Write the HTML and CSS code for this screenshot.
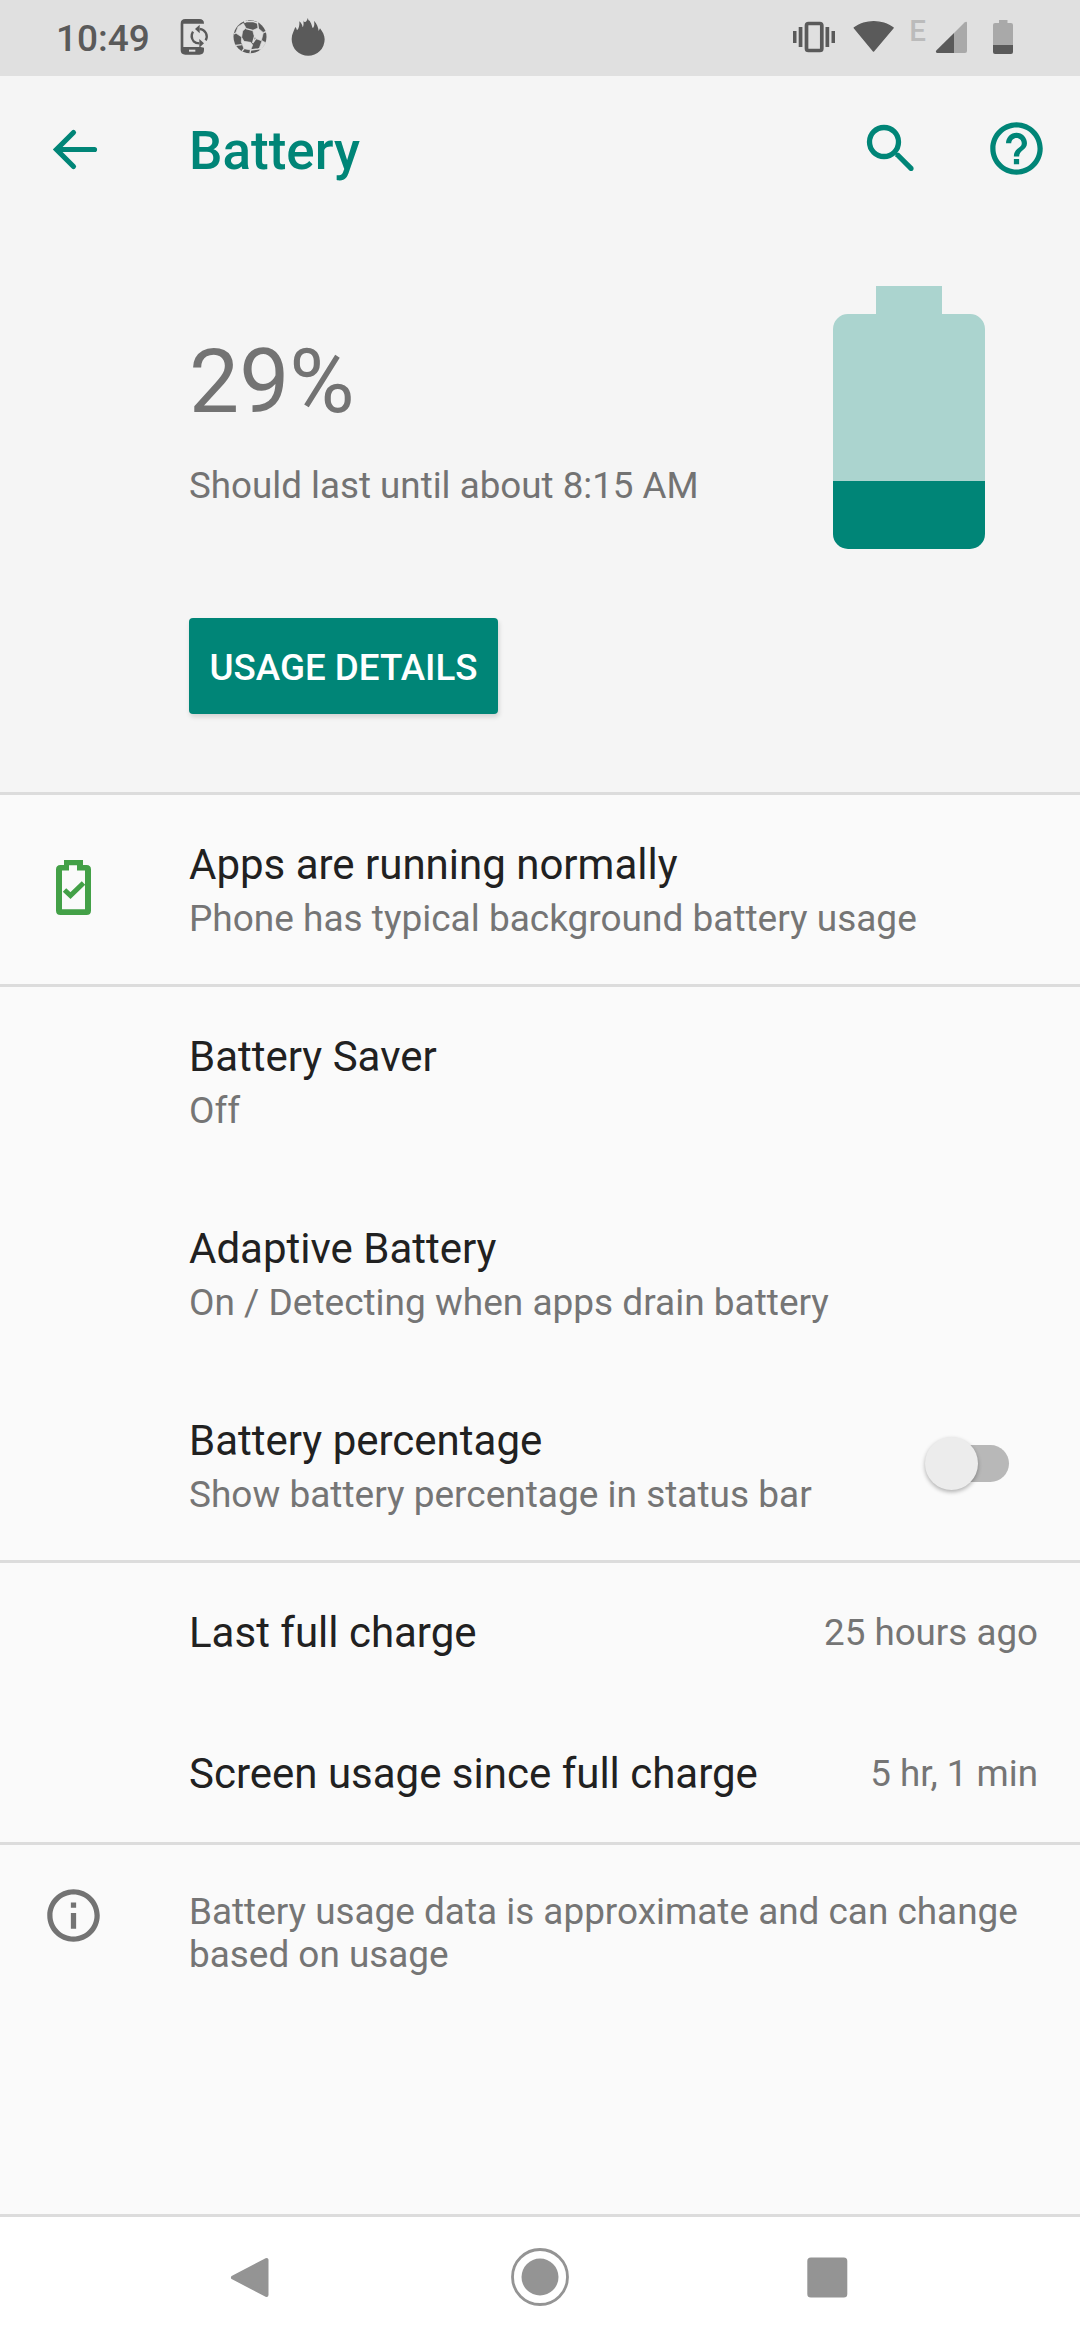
FILE: index.html
```html
<!DOCTYPE html>
<html lang="en">
<head>
<meta charset="utf-8">
<title>Battery</title>
<link rel="stylesheet" href="styles.css">
</head>
<body>
<div class="screen">
  <header class="status">
    <span class="clock">10:49</span>
    <svg class="status-icons" width="170" height="76" viewBox="0 0 510 228">
      <path fill="#5a5a5a" d="M46 57h42q14 0 14 14H40V141h52l10 2v7q0 14-14 14H46q-14 0-14-14V71q0-14 14-14z"/>
      <path fill="#e0e0e0" d="M57 149h19v6H57z"/>
      <path fill="none" stroke="#5a5a5a" stroke-width="7" d="M69 95Q60 110 71 124Q77 130 88 130M89 87Q102 88 108 100Q113 110 107 121"/>
      <path fill="#5a5a5a" d="M75 87l14-13v26zM102 130l-14-13v26z"/>
      <circle cx="240" cy="110.500" r="49.500" fill="#5a5a5a"/>
      <g fill="#dedede" stroke="#dedede" stroke-width="2" stroke-linejoin="round">
        <path d="M204 80l16-10 8 14-10 9-3 18-18-12z"/>
        <path d="M248 91l16-7 16 14-6 24-16-6-6-10z"/>
        <path d="M215 112l7 12 20 3 6 8-6 15-20-4-8-20z"/>
        <path d="M276 122l11 6-12 20-8-1z"/>
        <path d="M224 64l10-2-10 7z"/>
      </g>
      <g fill="none" stroke="#dedede" stroke-width="4">
        <path d="M228 86l20 5M262 64l3 22M280 98l8-3M254 107l-6 22 10-13M242 150l-2 10M242 150l22-3 10-2M197 99l-5 3M215 134l-17 2M222 146l-6 8M222 65l26-1 14 5"/>
      </g>
      <path fill="#5a5a5a" d="M365 117c0-15 7-24 11-36 3 3 4 6 5 10 6-5 8-15 7-27 6 5 9 11 10 18 4-4 3-16 1-24 0 5 2 8 6 8 3 0 6-5 9-13 0 5 1 8 5 9 3 6 6 11 7 17q1 8 5 2c3-6 2-13 1-19 8 8 13 20 14 31l4-8c7 9 14 20 14 33a49.500 49.500 0 0 1-99 0z"/>
    </svg>
    <span class="grow"></span>
    <svg class="status-icons" width="290" height="76" viewBox="790 0 290 76">
      <rect x="806.500" y="23.500" width="15.300" height="27" rx="2" fill="none" stroke="#5a5a5a" stroke-width="3.700"/>
      <path fill="#5a5a5a" d="M793 31h3.500v12H793zM798.700 27h3.700v20h-3.700zM825.500 27h3.700v20h-3.700zM831.500 31h3.500v12h-3.500z"/>
      <path fill="#5a5a5a" stroke="#5a5a5a" stroke-width="1.500" stroke-linejoin="round" d="M873.500 51l-19.200-23.200a34 34 0 0 1 38.800 0z"/>
      <path fill="#a9a9a9" d="M967 23v28q0 2-2 2h-11V33l10.500-10.500q2.500-1.500 2.500.5z"/>
      <path fill="#5a5a5a" d="M954 33v20h-17q-2-1-.5-2.700z"/>
      <path fill="#a9a9a9" d="M999 20h8.500v3h3.500q2 0 2 2v20h-20V25q0-2 2-2h4z"/>
      <path fill="#5a5a5a" d="M993 45h20v7q0 2-2 2h-16q-2 0-2-2z"/>
      <text class="edge" x="909.200" y="41">E</text>
    </svg>
  </header>

  <section class="summary-panel">
    <div class="toolbar">
      <svg class="back" width="63" height="63" viewBox="0 0 63 63"><path fill="none" stroke="#008577" stroke-width="5.200" stroke-linecap="round" d="M52.500 31.500H15M31.500 14.500l-17 17 17 17" stroke-linejoin="miter"/></svg>
      <h1>Battery</h1>
      <svg width="63" height="63" viewBox="0 0 63 63"><circle cx="25" cy="24" r="14.500" fill="none" stroke="#008577" stroke-width="5.300"/><path fill="#008577" d="M37 34.700h3l14.300 14.200q1 2-.4 3.500-1.800 1.200-3.500 0L36.300 38.300v-3z"/></svg>
      <svg class="help" width="63" height="63" viewBox="0 0 24 24"><path fill="#008577" d="M11 18h2v-2h-2v2zm1-16C6.480 2 2 6.480 2 12s4.480 10 10 10 10-4.480 10-10S17.520 2 12 2zm0 18c-4.410 0-8-3.590-8-8s3.590-8 8-8 8 3.590 8 8-3.590 8-8 8zm0-14c-2.210 0-4 1.790-4 4h2c0-1.100.9-2 2-2s2 .9 2 2c0 2-3 1.750-3 5h2c0-2.250 3-2.500 3-5 0-2.210-1.790-4-4-4z"/></svg>
    </div>
    <div class="level">
      <div class="level-text">
        <div class="percent">29%</div>
        <div class="estimate">Should last until about 8:15 AM</div>
      </div>
      <svg width="152" height="263" viewBox="0 0 152 263"><path fill="#abd4cf" d="M43 0h66v28h28a15 15 0 0 1 15 15v153H0V43a15 15 0 0 1 15-15h28z"/><path fill="#008577" d="M0 195h152v53a15 15 0 0 1-15 15H15a15 15 0 0 1-15-15z"/></svg>
    </div>
    <button class="details">USAGE DETAILS</button>
  </section>

  <main>
    <div class="row line">
      <svg class="icon" width="63" height="63" viewBox="0 0 63 63"><path fill="#43a047" fill-rule="evenodd" d="M22 4h19v5h3.500q4.500 0 4.500 4.500v41q0 4.500-4.500 4.500h-26q-4.500 0-4.500-4.500v-41q0-4.500 4.500-4.500H22zm5 5.300V14.500H20v38.800h23V14.500h-8V9.300z"/><path fill="none" stroke="#43a047" stroke-width="5" d="M22.500 34l6 5.500 13-12.500"/></svg>
      <div class="copy"><div class="title">Apps are running normally</div><div class="sub">Phone has typical background battery usage</div></div>
    </div>
    <div class="row line"><div class="copy"><div class="title">Battery Saver</div><div class="sub">Off</div></div></div>
    <div class="row"><div class="copy"><div class="title">Adaptive Battery</div><div class="sub">On / Detecting when apps drain battery</div></div></div>
    <div class="row">
      <div class="copy"><div class="title">Battery percentage</div><div class="sub">Show battery percentage in status bar</div></div>
      <div class="switch"><span class="thumb"></span></div>
    </div>
    <div class="row short line"><div class="title">Last full charge</div><div class="value">25 hours ago</div></div>
    <div class="row short"><div class="title">Screen usage since full charge</div><div class="value">5 hr, 1 min</div></div>
    <div class="footer line">
      <svg class="icon" width="63" height="63" viewBox="0 0 24 24"><path fill="#737373" d="M11 7h2v2h-2zm0 4h2v6h-2zm1-9C6.480 2 2 6.480 2 12s4.480 10 10 10 10-4.480 10-10S17.520 2 12 2zm0 18c-4.410 0-8-3.590-8-8s3.590-8 8-8 8 3.590 8 8-3.590 8-8 8z"/></svg>
      <p>Battery usage data is approximate and can change based on usage</p>
    </div>
  </main>

  <nav class="nav">
    <svg width="60" height="60" viewBox="0 0 60 60"><path fill="#949494" stroke="#949494" stroke-width="4" stroke-linejoin="round" d="M44.500 13v35L11 30.500z"/></svg>
    <svg width="60" height="60" viewBox="0 0 60 60"><circle cx="30" cy="30" r="27.500" fill="none" stroke="#949494" stroke-width="2.800"/><circle cx="30" cy="30" r="18.500" fill="#949494"/></svg>
    <svg width="60" height="60" viewBox="0 0 60 60"><rect x="9.300" y="10.500" width="40" height="40" rx="3.500" fill="#949494"/></svg>
  </nav>
</div>
</body>
</html>
```
FILE: styles.css
```css
* { box-sizing: border-box; margin: 0; padding: 0; }
body { background: #fafafa; font-family: Roboto, sans-serif; }
svg { display: block; flex: none; }
.screen { width: 1080px; height: 2340px; display: flex; flex-direction: column; background: #fafafa; }
.grow { flex: 1; }

.status { height: 76px; background: #e0e0e0; display: flex; align-items: center; overflow: hidden; }
.clock { width: 170px; padding-left: 56px; font-size: 37px; font-weight: 500; color: #5a5a5a; white-space: nowrap; }
.edge { font-size: 29.5px; font-weight: 500; fill: #bbb; }

.summary-panel { height: 716px; background: #f5f5f5; }
.toolbar { height: 147px; display: flex; align-items: center; padding-right: 32px; }
.back { margin-left: 42px; }
.toolbar h1 { flex: 1; margin-left: 84px; padding-top: 2px; font-size: 53px; font-weight: 500; color: #008577; }
.help { margin: -2px 0 0 63px; }
.level { height: 395px; padding: 63px 95px 0 189px; display: flex; justify-content: space-between; }
.percent { margin-top: 43px; font-size: 89.25px; line-height: 105px; color: #737373; }
.estimate { margin-top: 30px; font-size: 36.75px; line-height: 43px; color: #737373; }
.details { display: block; margin-left: 189px; padding-top: 2px; width: 309px; height: 96px; border: 0; border-radius: 4px; background: #008577; color: #fff; font: 500 36.75px Roboto, sans-serif; white-space: nowrap; box-shadow: 1px 3px 5px rgba(0,0,0,.14); }

main { flex: 1; }
.row { height: 192px; padding: 4px 42px 0 189px; display: flex; align-items: center; justify-content: space-between; }
.line { border-top: 3px solid #dcdcdc; padding-top: 1px; }
.row .icon { margin: -5px 84px 0 -147px; }
.row .copy { flex: 1; }
.title { font-size: 42px; line-height: 56px; color: #212121; white-space: nowrap; }
.sub, .value { font-size: 36.75px; line-height: 50px; color: #757575; white-space: nowrap; }
.sub { font-size: 37px; line-height: 51px; }
.short { height: 141px; padding-top: 5px; }
.short.line { padding-top: 2px; }
.switch { position: relative; width: 84px; height: 53px; margin: 0 29px 5px 0; padding: 8px 0 8px 26px; display: flex; }
.switch::before { content: ""; flex: 1; border-radius: 19px; background: #b8b8b8; }
.thumb { position: absolute; left: 0; top: 0; width: 53px; height: 53px; border-radius: 50%; background: #ececec; box-shadow: 0 2px 4px rgba(0,0,0,.3); }
.footer { padding: 39px 42px 0; display: flex; gap: 84px; }
.footer p { padding-top: 6px; font-size: 36.9px; line-height: 43px; color: #757575; }

.nav { height: 126px; padding-bottom: 4px; border-top: 3px solid #dcdcdc; background: #fff; display: flex; justify-content: center; align-items: center; gap: 228px; }
```
